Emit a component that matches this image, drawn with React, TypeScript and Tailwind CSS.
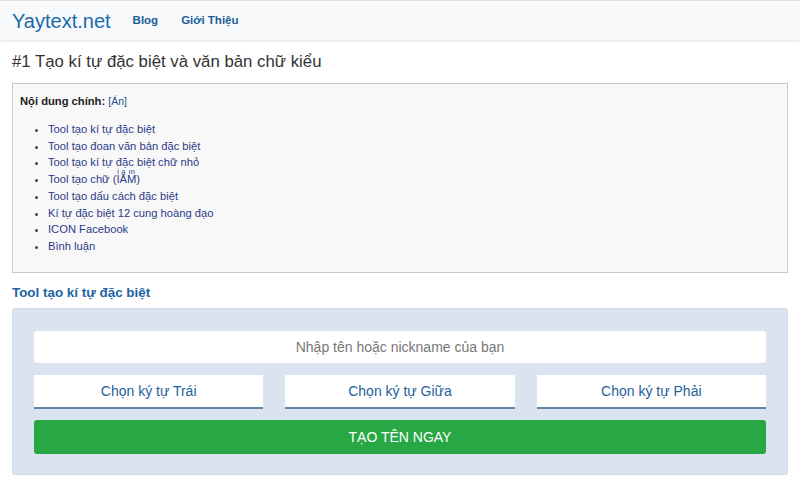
export default function App() {
  const toc = [
    "Tool tạo kí tự đặc biệt",
    "Tool tạo đoan văn bản đặc biệt",
    "Tool tạo kí tự đặc biệt chữ nhỏ",
    "Tool tạo chữ (I\u0365A\u0363M\u036B)",
    "Tool tạo dấu cách đặc biệt",
    "Kí tự đặc biệt 12 cung hoàng đạo",
    "ICON Facebook",
    "Bình luận",
  ];

  return (
    <div className="min-h-[482px] bg-white font-['Liberation_Sans',Arial,sans-serif] text-[#333]">
      <nav className="h-[40px] border-t border-[#e3e3e3] bg-[#f8f9fa] shadow-[0_1px_3px_rgba(0,0,0,0.12)] flex items-center px-3">
        <a className="text-[20px] text-[#1a6aaa] leading-none mr-[22px]">Yaytext.net</a>
        <a className="text-[11.5px] font-bold text-[#1a5f99] mr-[23px]">Blog</a>
        <a className="text-[11.5px] font-bold text-[#1a5f99]">Giới Thiệu</a>
      </nav>

      <div className="px-3">
        <h1 className="text-[16.8px] leading-[22px] mt-[11px] mb-[10px]">#1 Tạo kí tự đặc biệt và văn bản chữ kiểu</h1>

        <div className="border border-[#c8c8c8] bg-[#f8f8f8] h-[190px] pt-[10px] pl-[7px]">
          <div className="text-[11.2px] leading-[14px]">
            <span className="font-bold text-[#222]">Nội dung chính:</span>{" "}
            <span className="text-[10.5px] text-[#2a4d8f]">[Ẩn]</span>
          </div>
          <ul className="mt-[13px] ml-[28px] list-disc text-[11.2px] leading-[16.7px] text-[#2c3a8a] marker:text-[#444]">
            {toc.map((t) => (
              <li key={t}>{t}</li>
            ))}
          </ul>
        </div>

        <h2 className="text-[13.4px] font-bold text-[#1d64a5] mt-[12px] mb-[7px] leading-[16px]">Tool tạo kí tự đặc biệt</h2>

        <div className="bg-[#dae3ef] rounded-[3px] border border-[#d0d9e6] h-[167px] px-[21px] pt-[22px] flex flex-col">
          <input
            className="h-[32px] w-full bg-white rounded-[3px] text-center text-[14px] text-[#555] placeholder:text-[#777] outline-none"
            placeholder="Nhập tên hoặc nickname của bạn"
          />
          <div className="grid grid-cols-3 gap-[22px] mt-[12px]">
            {["Chọn ký tự Trái", "Chọn ký tự Giữa", "Chọn ký tự Phải"].map((b) => (
              <button
                key={b}
                className="h-[34px] bg-white border-b-2 border-[#5e87aa] text-[14px] text-[#1e5f99]"
              >
                {b}
              </button>
            ))}
          </div>
          <button className="mt-[11px] h-[34px] w-full rounded-[3px] bg-[#28a745] text-white text-[14px]">
            TẠO TÊN NGAY
          </button>
        </div>
      </div>
    </div>
  );
}
